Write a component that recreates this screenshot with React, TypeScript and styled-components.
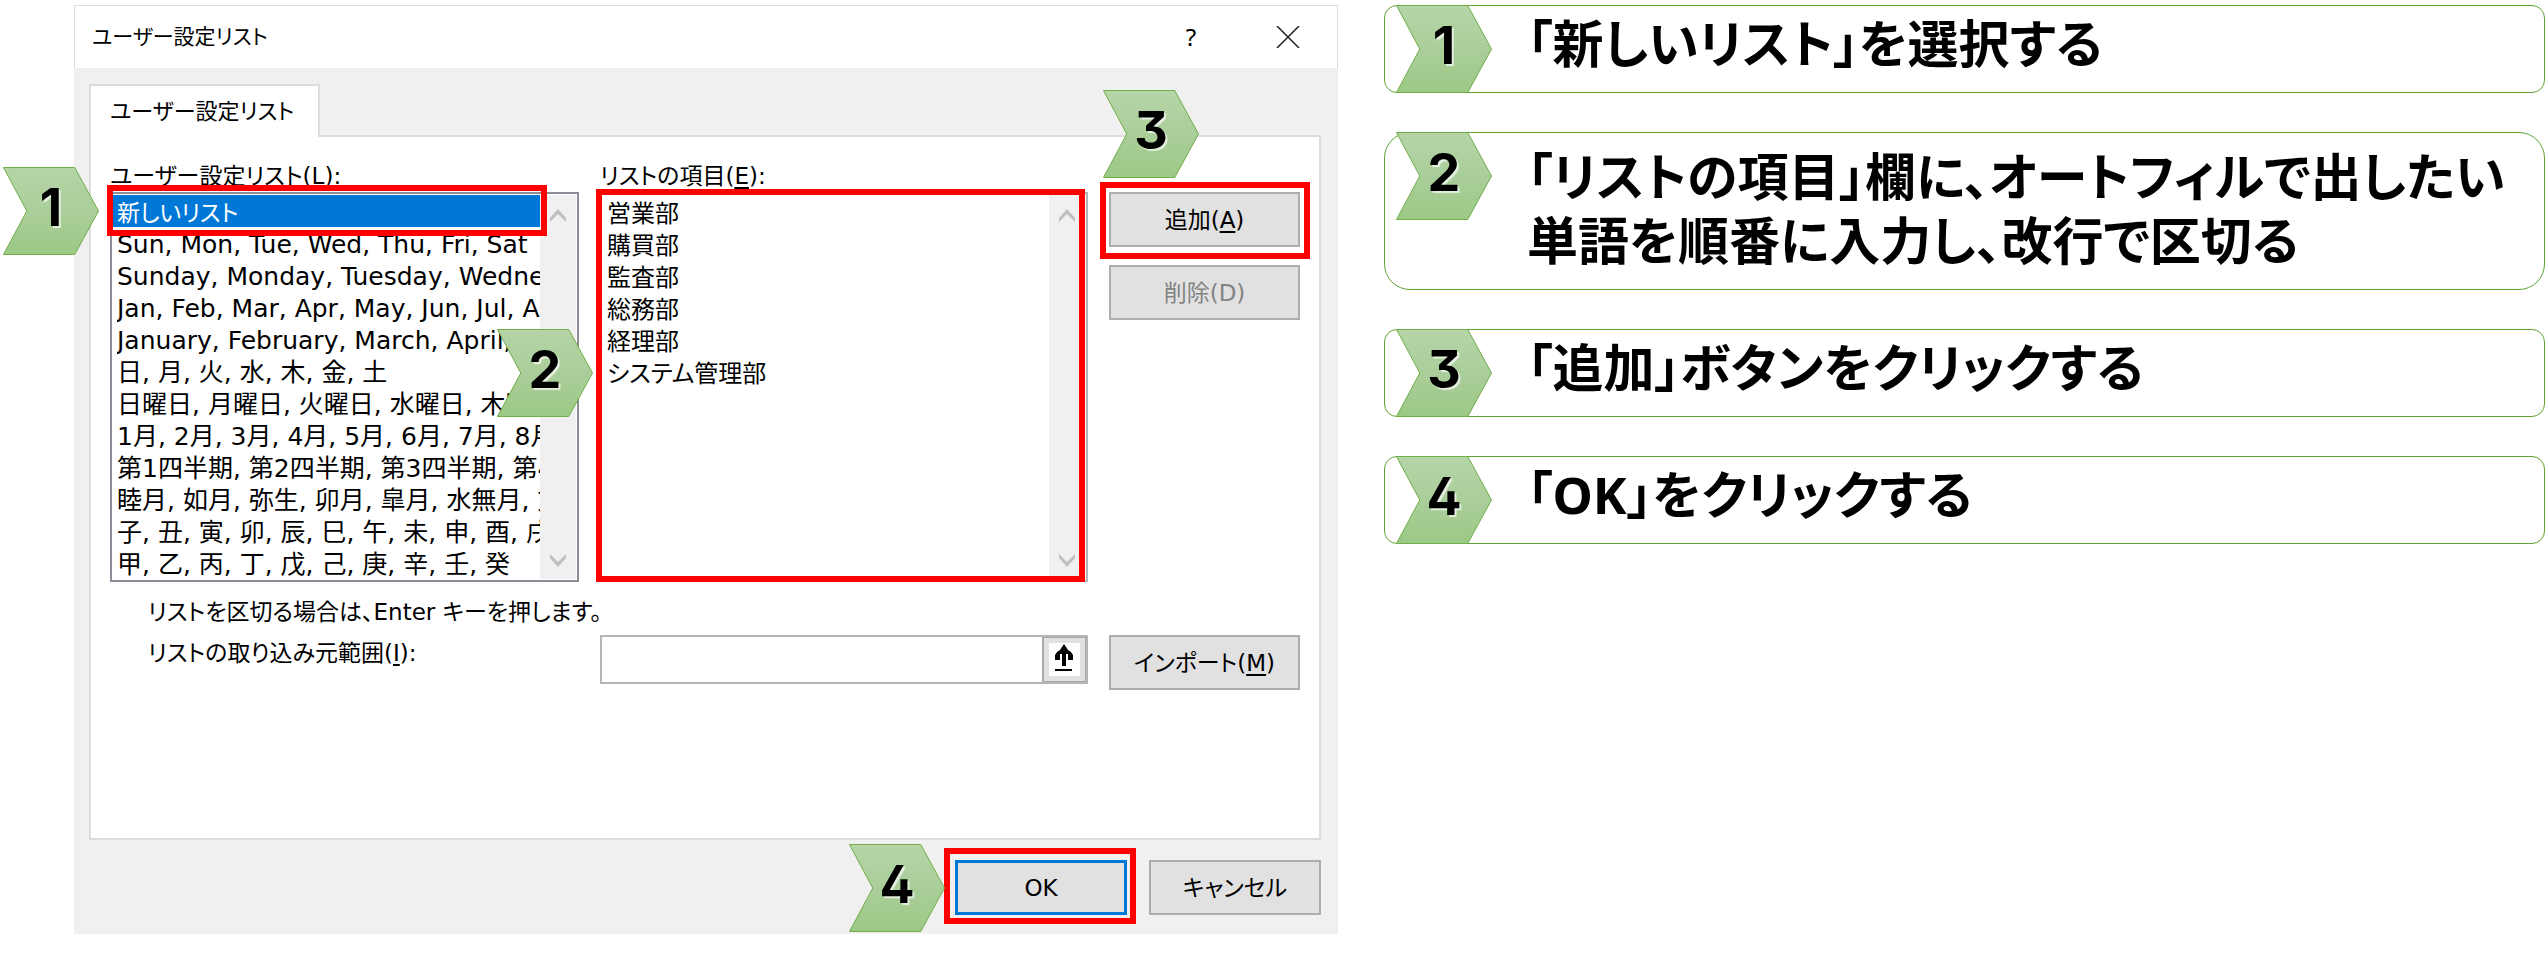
import React from "react";
import styled, { createGlobalStyle } from "styled-components";

const GlobalStyle = createGlobalStyle`
  *, *::before, *::after { box-sizing: border-box; }
  body {
    margin: 0;
    background: #fff;
    color: #000;
    font-family: "DejaVu Sans", "Noto Sans CJK JP", sans-serif;
    font-size: 24px;
    line-height: 32px;
    font-feature-settings: "palt";
  }
  button, input, textarea {
    font: inherit;
    color: inherit;
    font-feature-settings: inherit;
  }
`;

const Page = styled.div`
  display: grid;
  grid-template-columns: minmax(0, 1264fr) minmax(0, 1161fr);
  column-gap: 46px;
  align-items: start;
  padding: 5px 1px 19px 74px;
`;

/* ---------- numbered arrows and highlight frames ---------- */

const Arrow = styled.span`
  position: relative;
  z-index: 0;
  flex: none;
  display: flex;
  align-items: center;
  justify-content: center;
  width: 96px;
  height: 88px;
  padding-bottom: 6px;
  color: #000;
  font-family: Inter, sans-serif;
  font-feature-settings: "ss01";
  font-weight: 700;
  font-size: 52px;
  line-height: 52px;
  text-shadow: 2px 2px 1px rgba(255, 255, 255, 0.7);
`;

const ArrowShape = styled.svg`
  position: absolute;
  inset: 0;
  z-index: -1;
  width: 100%;
  height: 100%;
`;

const Pin = styled.div<{ $side: "left" | "above" | "middle"; $gap: number }>`
  position: absolute;
  z-index: 3;
  ${(p) =>
    p.$side === "above"
      ? `left: -6px; bottom: calc(100% + ${p.$gap}px);`
      : p.$side === "middle"
        ? `right: calc(100% + ${p.$gap}px); top: 35%;`
        : `right: calc(100% + ${p.$gap}px); top: 50%; transform: translateY(-50%);`}
`;

const Frame = styled.div<{ $inset: string }>`
  position: absolute;
  z-index: 2;
  inset: ${(p) => p.$inset};
  border: 6px solid #f00;
  pointer-events: none;
`;

/* ---------- dialog ---------- */

const Dialog = styled.section`
  display: flex;
  flex-direction: column;
  min-height: 929px;
  background: #f0f0f0;
`;

const TitleBar = styled.header`
  display: flex;
  align-items: center;
  height: 63px;
  padding: 0 37px 0 17px;
  background: #fff;
  border: 1px solid #dcdcdc;
  border-bottom: 0;
`;

const Title = styled.h1`
  flex: 1;
  margin: 0;
  font-size: 21px;
  line-height: 32px;
  font-weight: 400;
`;

const TitleButton = styled.button`
  display: grid;
  place-items: center;
  width: 24px;
  height: 32px;
  margin-left: 73px;
  padding: 0;
  border: 0;
  background: none;
  font-family: "Noto Sans", sans-serif;
`;

const Body = styled.div`
  flex: 1;
  display: flex;
  flex-direction: column;
  padding: 16px 17px 0 15px;
`;

const Tab = styled.button`
  align-self: flex-start;
  position: relative;
  z-index: 1;
  height: 53px;
  margin-bottom: -2px;
  padding: 0 22px 0 19px;
  min-width: 231px;
  text-align: left;
  border: 2px solid #dcdcdc;
  border-bottom: 0;
  background: #fff;
  font-size: 22px;
`;

const Panel = styled.div`
  flex: 1;
  padding: 23px 19px;
  border: 2px solid #dcdcdc;
  background: #fff;
`;

const Columns = styled.div`
  display: grid;
  grid-template-columns: minmax(0, 469fr) minmax(0, 488fr) 191px;
  column-gap: 21px;
`;

const Field = styled.div`
  display: flex;
  flex-direction: column;
`;

const Label = styled.label`
  display: block;
  font-size: 23px;
  line-height: 32px;
`;

const Key = styled.span`
  text-decoration: underline;
  text-decoration-thickness: 2px;
  text-underline-offset: 3px;
`;

const ListFrame = styled.div<{ $light?: boolean }>`
  position: relative;
  display: flex;
  height: 390px;
  padding: 1px;
  border: 2px solid ${(p) => (p.$light ? "#b4b5b9" : "#8b8e96")};
  background: #fff;
`;

const List = styled.ul`
  flex: 1;
  min-width: 0;
  margin: 0;
  padding: 0;
  list-style: none;
`;

const Item = styled.li<{ $selected?: boolean }>`
  position: relative;
  height: 32px;
  padding-left: 4px;
  background: ${(p) => (p.$selected ? "#0078d7" : "transparent")};
  color: ${(p) => (p.$selected ? "#fff" : "#000")};
  font-size: ${(p) => (p.$selected ? 23 : 25)}px;
`;

const ItemText = styled.span`
  display: block;
  padding-top: 2px;
  overflow: hidden;
  white-space: nowrap;
`;

const Entries = styled.textarea`
  flex: 1;
  min-width: 0;
  padding: 3px 4px;
  border: 0;
  outline: 0;
  resize: none;
  overflow: hidden;
  background: none;
  line-height: 32px;
`;

const Track = styled.div`
  display: flex;
  flex-direction: column;
  justify-content: space-between;
  align-items: center;
  width: 36px;
  padding: 14px 0 12px;
  background: #f0f0f0;
`;

const ButtonColumn = styled.div`
  display: flex;
  flex-direction: column;
  gap: 18px;
  padding-top: 32px;
`;

const Anchor = styled.div`
  position: relative;
`;

const PushButton = styled.button<{ $primary?: boolean }>`
  display: block;
  width: 100%;
  height: 55px;
  padding: 0;
  border: ${(p) => (p.$primary ? "3px solid #0078d7" : "2px solid #adadad")};
  background: #e1e1e1;
  font-size: 23px;
  &:disabled { color: #838383; }
`;

const Hint = styled.p`
  margin: 14px 0 7px 38px;
  font-size: 23px;
  line-height: 32px;
`;

const ImportLabel = styled(Label)`
  padding: 2px 0 0 38px;
`;

const RangeBox = styled.div`
  display: flex;
  height: 49px;
  border: 2px solid #b4b5b9;
`;

const RangeInput = styled.input`
  flex: 1;
  min-width: 0;
  padding: 0 6px;
  border: 0;
  outline: 0;
  background: #fff;
`;

const PickButton = styled.button`
  display: grid;
  place-items: center;
  width: 44px;
  padding: 0;
  border: 2px solid #a9a9ad;
  border-width: 1px 1px 1px 2px;
  background: #e1e1e1;
`;

const Footer = styled.footer`
  display: flex;
  justify-content: flex-end;
  gap: 22px;
  padding: 20px 0 19px;
`;

const FooterItem = styled.div`
  position: relative;
  width: 172px;
`;

/* ---------- steps ---------- */

const Steps = styled.ol`
  display: flex;
  flex-direction: column;
  gap: 39px;
  margin: 0;
  padding: 0;
  list-style: none;
`;

const Step = styled.li<{ $tall?: boolean }>`
  display: flex;
  align-items: flex-start;
  gap: 35px;
  min-height: ${(p) => (p.$tall ? 158 : 88)}px;
  padding-left: 11px;
  border: 1px solid #5fa433;
  border-radius: ${(p) => (p.$tall ? 26 : 13)}px;
  & > span { margin: -1px 0; }
`;

const StepText = styled.p<{ $tall?: boolean }>`
  margin: 0;
  padding-top: ${(p) => (p.$tall ? 11 : 5)}px;
  font-family: "Noto Sans", "Noto Sans CJK JP", sans-serif;
  font-size: 51px;
  line-height: 64px;
  font-weight: 700;
  white-space: nowrap;
`;

function NumberArrow({ n }: { n: number }) {
  return (
    <Arrow>
      <ArrowShape viewBox="0 0 97 88" preserveAspectRatio="none" aria-hidden="true">
        <defs>
          <linearGradient id="leaf" x1="0" y1="0" x2="0" y2="1">
            <stop offset="0" stopColor="#b5d5a7" />
            <stop offset="0.5" stopColor="#aace9a" />
            <stop offset="1" stopColor="#9cc986" />
          </linearGradient>
        </defs>
        <path d="M.5.5H72.500L96.500 44 72.500 87.500H.5L24 44Z" fill="url(#leaf)" stroke="#70ad47" />
      </ArrowShape>
      {n}
    </Arrow>
  );
}

function ScrollTrack() {
  return (
    <Track aria-hidden="true">
      <svg width="18" height="14" viewBox="0 0 18 14">
        <path d="M1 13V9L9 0l8 9v4L9 5Z" fill="#bfbfbf" />
      </svg>
      <svg width="18" height="14" viewBox="0 0 18 14">
        <path d="M1 1v4l8 9 8-9V1L9 9Z" fill="#bfbfbf" />
      </svg>
    </Track>
  );
}

const lists = [
  "Sun, Mon, Tue, Wed, Thu, Fri, Sat",
  "Sunday, Monday, Tuesday, Wednesday",
  "Jan, Feb, Mar, Apr, May, Jun, Jul, Aug",
  "January, February, March, April, May",
  "日, 月, 火, 水, 木, 金, 土",
  "日曜日, 月曜日, 火曜日, 水曜日, 木曜日",
  "1月, 2月, 3月, 4月, 5月, 6月, 7月, 8月",
  "第1四半期, 第2四半期, 第3四半期, 第4四半期",
  "睦月, 如月, 弥生, 卯月, 皐月, 水無月, 文月",
  "子, 丑, 寅, 卯, 辰, 巳, 午, 未, 申, 酉, 戌, 亥",
  "甲, 乙, 丙, 丁, 戊, 己, 庚, 辛, 壬, 癸",
];

const entries = ["営業部", "購買部", "監査部", "総務部", "経理部", "システム管理部"];

export default function App() {
  return (
    <>
      <GlobalStyle />
      <Page>
        <Dialog role="dialog" aria-labelledby="dialog-title">
          <TitleBar>
            <Title id="dialog-title">ユーザー設定リスト</Title>
            <TitleButton aria-label="ヘルプ">?</TitleButton>
            <TitleButton aria-label="閉じる">
              <svg width="24" height="22" viewBox="0 0 24 22" stroke="#222" strokeWidth="1.5">
                <path d="M1 0 23 22M23 0 1 22" />
              </svg>
            </TitleButton>
          </TitleBar>
          <Body>
            <Tab role="tab" aria-selected="true">ユーザー設定リスト</Tab>
            <Panel>
              <Columns>
                <Field>
                  <Label id="lists-label">ユーザー設定リスト(<Key>L</Key>):</Label>
                  <ListFrame>
                    <List role="listbox" aria-labelledby="lists-label">
                      <Item role="option" aria-selected="true" $selected>
                        <ItemText>新しいリスト</ItemText>
                        <Frame $inset="-10px -7px -9px -6px" />
                        <Pin $side="left" $gap={14}>
                          <NumberArrow n={1} />
                        </Pin>
                      </Item>
                      {lists.map((text) => (
                        <Item key={text} role="option" aria-selected="false">
                          <ItemText>{text}</ItemText>
                        </Item>
                      ))}
                    </List>
                    <ScrollTrack />
                  </ListFrame>
                </Field>
                <Field>
                  <Label htmlFor="entries">リストの項目(<Key>E</Key>):</Label>
                  <ListFrame $light>
                    <Entries id="entries" defaultValue={entries.join("\n")} />
                    <ScrollTrack />
                    <Frame $inset="-5px 1px -2px -6px" />
                    <Pin $side="middle" $gap={9}>
                      <NumberArrow n={2} />
                    </Pin>
                  </ListFrame>
                </Field>
                <ButtonColumn>
                  <Anchor>
                    <PushButton>追加(<Key>A</Key>)</PushButton>
                    <Frame $inset="-10px -10px -12px -9px" />
                    <Pin $side="above" $gap={14}>
                      <NumberArrow n={3} />
                    </Pin>
                  </Anchor>
                  <PushButton disabled>削除(D)</PushButton>
                </ButtonColumn>
              </Columns>
              <Hint>リストを区切る場合は、Enter キーを押します。</Hint>
              <Columns>
                <ImportLabel htmlFor="range">リストの取り込み元範囲(<Key>I</Key>):</ImportLabel>
                <RangeBox>
                  <RangeInput id="range" />
                  <PickButton aria-label="範囲を選択">
                    <svg width="31" height="33" viewBox="0 0 31 33">
                      <path d="M0 0h31v33H0Z" fill="#fff" />
                      <path
                        d="M13 23V11h-2v6H6v-5l2-3 3-2 2-3 2-3 2 3 2 3 3 2 2 3v5h-5v-6h-2v12ZM6 26h17v2H6Z"
                        fill="#000"
                      />
                    </svg>
                  </PickButton>
                </RangeBox>
                <PushButton>インポート(<Key>M</Key>)</PushButton>
              </Columns>
            </Panel>
            <Footer>
              <FooterItem>
                <PushButton $primary>OK</PushButton>
                <Frame $inset="-12px -9px -9px -11px" />
                <Pin $side="left" $gap={10}>
                  <NumberArrow n={4} />
                </Pin>
              </FooterItem>
              <FooterItem>
                <PushButton>キャンセル</PushButton>
              </FooterItem>
            </Footer>
          </Body>
        </Dialog>
        <Steps>
          <Step>
            <NumberArrow n={1} />
            <StepText>「新しいリスト」を選択する</StepText>
          </Step>
          <Step $tall>
            <NumberArrow n={2} />
            <StepText $tall>
              「リストの項目」欄に、オートフィルで出したい
              <br />
              単語を順番に入力し、改行で区切る
            </StepText>
          </Step>
          <Step>
            <NumberArrow n={3} />
            <StepText>「追加」ボタンをクリックする</StepText>
          </Step>
          <Step>
            <NumberArrow n={4} />
            <StepText>「OK」をクリックする</StepText>
          </Step>
        </Steps>
      </Page>
    </>
  );
}
